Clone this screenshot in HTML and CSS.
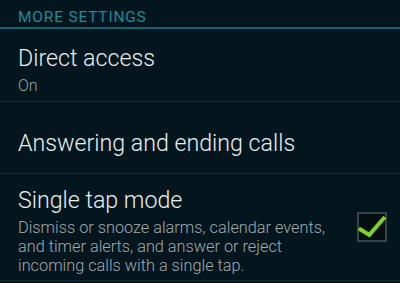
FILE: index.html
```html
<!DOCTYPE html>
<html>
<head>
<meta charset="utf-8">
<link rel="stylesheet" href="styles.css">
</head>
<body>
<div class="screen">
  <div class="section-header">MORE SETTINGS</div>
  <div class="item item-direct">
    <div class="item-text">
      <div class="title">Direct access</div>
      <div class="summary">On</div>
    </div>
  </div>
  <div class="item item-answer">
    <div class="item-text">
      <div class="title">Answering and ending calls</div>
    </div>
  </div>
  <div class="item item-single">
    <div class="item-text">
      <div class="title">Single tap mode</div>
      <div class="desc">Dismiss or snooze alarms, calendar events, and timer alerts, and answer or reject incoming calls with a single tap.</div>
    </div>
    <div class="checkbox">
      <svg width="30" height="29" viewBox="0 0 30 29">
        <path d="M3.5 17.5 L12.3 23 L26.5 6.5" fill="none" stroke="#7ad61c" stroke-width="4" stroke-linecap="square" stroke-linejoin="miter"/>
      </svg>
    </div>
  </div>
</div>
</body>
</html>
```
FILE: styles.css
```css
html, body {
  margin: 0;
  padding: 0;
  background: #03161d;
}
.screen {
  width: 400px;
  height: 283px;
  overflow: hidden;
  background: #03161d;
  font-family: Roboto, "Liberation Sans", sans-serif;
  font-weight: 300;
  display: flex;
  flex-direction: column;
}
.section-header {
  height: 29px;
  box-sizing: border-box;
  padding: 7px 0 0 18px;
  font-size: 15.5px;
  letter-spacing: 0.8px;
  line-height: 20px;
  font-weight: 400;
  color: #1a8b9e;
  border-bottom: 2px solid #0e6674;
  flex: none;
}
.item {
  display: flex;
  align-items: flex-start;
  box-sizing: border-box;
  padding-left: 18px;
  border-bottom: 1px solid #1a2c33;
  flex: none;
}
.item-text {
  flex: 1;
}
.item-direct {
  height: 73px;
  padding-top: 16px;
}
.item-answer {
  height: 72px;
  padding-top: 28px;
}
.item-single {
  height: 107px;
  padding-top: 13px;
  padding-right: 13px;
}
.title {
  font-size: 23.2px;
  line-height: 26px;
  color: #e9eef0;
}
.summary {
  margin-top: 5px;
  font-size: 16px;
  line-height: 20px;
  color: #99a3a7;
}
.desc {
  margin-top: 5px;
  font-size: 16.3px;
  line-height: 19px;
  color: #a2abaf;
  width: 320px;
}
.checkbox {
  width: 30px;
  height: 30px;
  margin-top: 25px;
  box-sizing: border-box;
  border: 2px solid #34454b;
  background: #040d10;
  position: relative;
  flex: none;
}
.checkbox svg {
  position: absolute;
  left: -2px;
  top: -2px;
}
```
